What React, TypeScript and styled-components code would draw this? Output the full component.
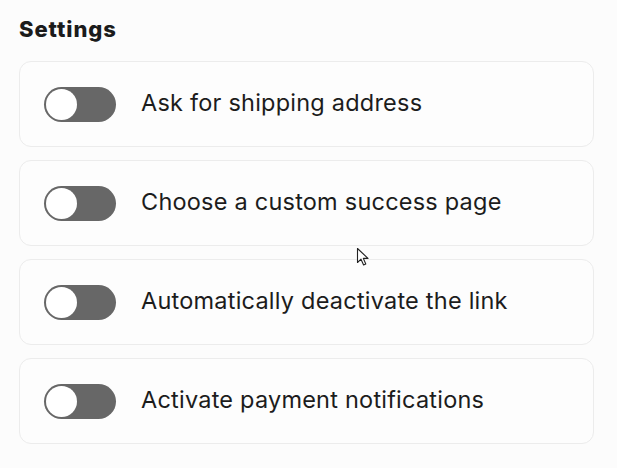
import styled, { createGlobalStyle } from 'styled-components';

const GlobalStyle = createGlobalStyle`
  body {
    margin: 0;
    background: #fcfcfc;
    font-family: Inter, "Noto Sans", sans-serif;
    color: #1a1a1a;
  }
`;

const Page = styled.div`
  position: relative;
  width: 617px;
  height: 468px;
  padding: 13px 23px 0 19px;
  box-sizing: border-box;
`;

const Title = styled.h2`
  margin: 0 0 16px;
  font-size: 22px;
  font-weight: 800;
  line-height: 32px;
  letter-spacing: 0.9px;
  color: #1b1b1b;
`;

const List = styled.div`
  display: flex;
  flex-direction: column;
  gap: 13px;
`;

const Card = styled.div`
  display: flex;
  align-items: center;
  gap: 25px;
  height: 86px;
  padding: 0 24px;
  box-sizing: border-box;
  background: #fdfdfd;
  border: 1px solid #ececec;
  border-radius: 12px;
`;

const Track = styled.div<{ $on: boolean }>`
  position: relative;
  width: 72px;
  height: 35px;
  border-radius: 18px;
  background: ${(p) => (p.$on ? '#1a1a1a' : '#676767')};
  flex-shrink: 0;
`;

const Knob = styled.div<{ $on: boolean }>`
  position: absolute;
  top: 2px;
  left: ${(p) => (p.$on ? '39px' : '2px')};
  width: 31px;
  height: 31px;
  border-radius: 50%;
  background: #ffffff;
`;

const Label = styled.span`
  font-size: 23.5px;
  line-height: 28px;
  margin-top: -2px;
  color: #1c1c1c;
  letter-spacing: 0.22px;
`;

const Cursor = styled.svg`
  position: absolute;
  left: 356px;
  top: 247px;
`;

const items = [
  'Ask for shipping address',
  'Choose a custom success page',
  'Automatically deactivate the link',
  'Activate payment notifications',
];

const App = () => {
  return (
    <Page>
      <GlobalStyle />
      <Title>Settings</Title>
      <List>
        {items.map((text) => (
          <Card key={text}>
            <Track $on={false}>
              <Knob $on={false} />
            </Track>
            <Label>{text}</Label>
          </Card>
        ))}
      </List>
      <Cursor width="14" height="20" viewBox="0 0 14 20">
        <path
          d="M1.5 1.5 L1.5 15.5 L5 12.2 L7.6 18 L9.8 17 L7.3 11.4 L12 11.4 Z"
          fill="#ffffff"
          stroke="#222"
          strokeWidth="1.1"
          strokeLinejoin="round"
        />
      </Cursor>
    </Page>
  );
};

export default App;
